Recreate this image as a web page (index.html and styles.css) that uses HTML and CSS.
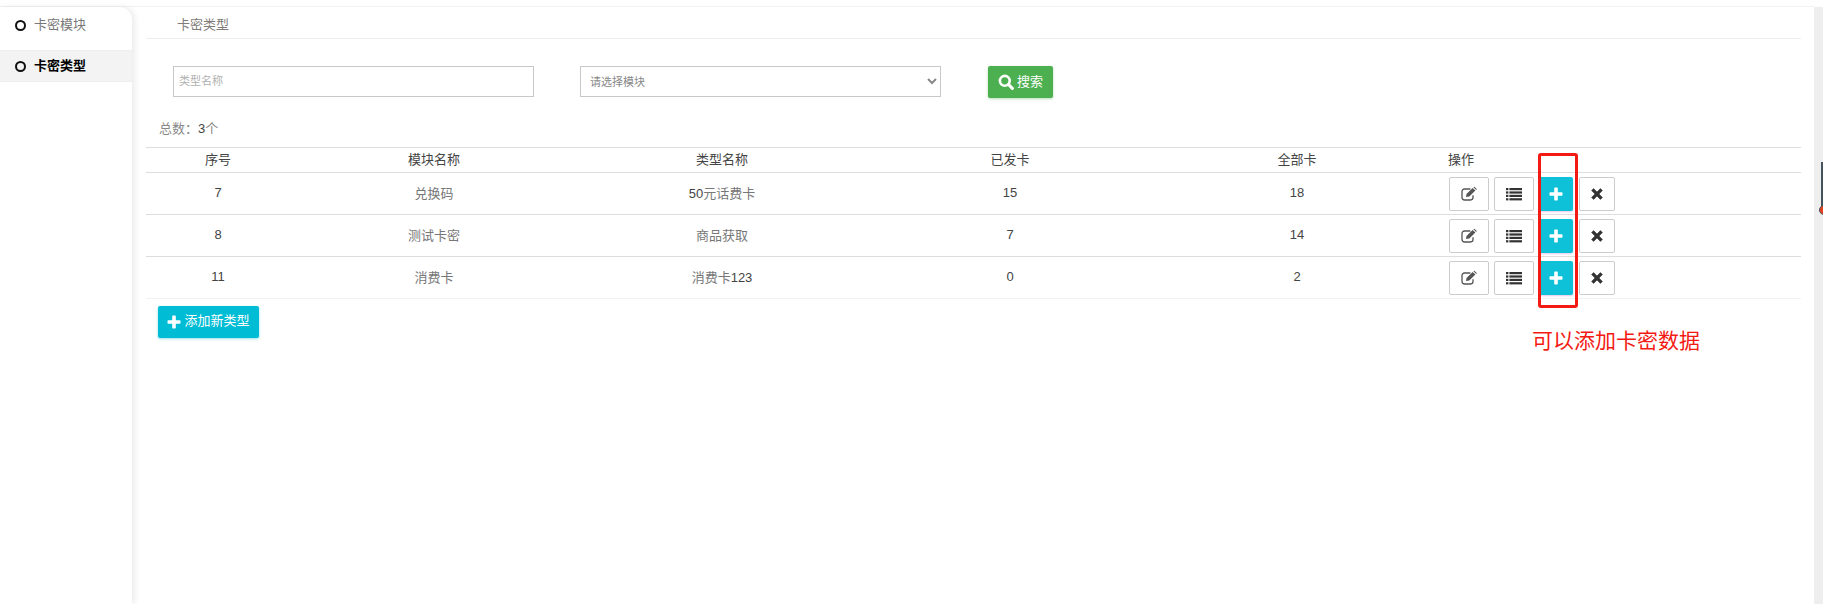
FILE: index.html
```html
<!DOCTYPE html>
<html lang="zh-CN">
<head>
<meta charset="utf-8">
<title>卡密类型</title>
<link rel="stylesheet" href="styles.css">
</head>
<body>
<div class="topline"></div>
<div class="layout">
  <nav class="sidebar">
    <a class="nav-item"><span class="dot"></span><span class="lift">卡密模块</span></a>
    <a class="nav-item active"><span class="dot"></span><span class="lift">卡密类型</span></a>
  </nav>
  <main class="main">
    <div class="crumb">卡密类型</div>
    <form class="search">
      <input class="field field-text" type="text" placeholder="类型名称">
      <select class="field field-select"><option>请选择模块</option></select>
      <button class="btn btn-green" type="button">
        <svg class="ic-search" viewBox="0 0 16 16"><circle cx="6.8" cy="6.8" r="4.9" fill="none" stroke="#fff" stroke-width="2.6"/><path d="M10.4 10.4 14.4 14.4" stroke="#fff" stroke-width="3" stroke-linecap="round"/></svg><span class="btn-label">搜索</span>
      </button>
    </form>
    <div class="total">总数：<span class="num">3</span>个</div>
    <table class="grid">
      <colgroup><col class="c1"><col class="c2"><col class="c2"><col class="c2"><col class="c5"><col></colgroup>
      <thead>
        <tr><th>序号</th><th>模块名称</th><th>类型名称</th><th>已发卡</th><th>全部卡</th><th class="left">操作</th></tr>
      </thead>
      <tbody>
        <tr>
          <td class="num">7</td><td>兑换码</td><td><span class="num">50</span>元话费卡</td><td class="num">15</td><td class="num">18</td>
          <td class="left"><div class="acts">
            <button class="act w40" type="button"><svg class="ic-edit" viewBox="0 0 16 14"><use href="#i-edit"/></svg></button>
            <button class="act w40" type="button"><svg class="ic-list" viewBox="0 0 16 14"><use href="#i-list"/></svg></button>
            <button class="act plus" type="button"><svg class="ic-plus" viewBox="0 0 14 14"><use href="#i-plus"/></svg></button>
            <button class="act w36" type="button"><svg class="ic-x" viewBox="0 0 12 12"><use href="#i-x"/></svg></button>
          </div></td>
        </tr>
        <tr>
          <td class="num">8</td><td>测试卡密</td><td>商品获取</td><td class="num">7</td><td class="num">14</td>
          <td class="left"><div class="acts">
            <button class="act w40" type="button"><svg class="ic-edit" viewBox="0 0 16 14"><use href="#i-edit"/></svg></button>
            <button class="act w40" type="button"><svg class="ic-list" viewBox="0 0 16 14"><use href="#i-list"/></svg></button>
            <button class="act plus" type="button"><svg class="ic-plus" viewBox="0 0 14 14"><use href="#i-plus"/></svg></button>
            <button class="act w36" type="button"><svg class="ic-x" viewBox="0 0 12 12"><use href="#i-x"/></svg></button>
          </div></td>
        </tr>
        <tr class="last">
          <td class="num">11</td><td>消费卡</td><td>消费卡<span class="num">123</span></td><td class="num">0</td><td class="num">2</td>
          <td class="left"><div class="acts">
            <button class="act w40" type="button"><svg class="ic-edit" viewBox="0 0 16 14"><use href="#i-edit"/></svg></button>
            <button class="act w40" type="button"><svg class="ic-list" viewBox="0 0 16 14"><use href="#i-list"/></svg></button>
            <button class="act plus" type="button"><svg class="ic-plus" viewBox="0 0 14 14"><use href="#i-plus"/></svg></button>
            <button class="act w36" type="button"><svg class="ic-x" viewBox="0 0 12 12"><use href="#i-x"/></svg></button>
          </div></td>
        </tr>
      </tbody>
    </table>
    <button class="btn btn-add" type="button"><svg class="ic-plus-sm" viewBox="0 0 14 14"><use href="#i-plus"/></svg><span class="btn-label">添加新类型</span></button>
  </main>
  <div class="strip"></div>
</div>

<div class="mark-box"></div>
<div class="mark-text">可以添加卡密数据</div>
<div class="scroll-line"></div>
<div class="scroll-dot"></div>

<svg class="defs" width="0" height="0">
  <defs>
    <g id="i-edit">
      <path d="M12 8.2V10.6A2.4 2.4 0 0 1 9.6 13H3.4A2.4 2.4 0 0 1 1 10.6V4.4A2.4 2.4 0 0 1 3.4 2H9.4" fill="none" stroke="currentColor" stroke-width="1.3"/>
      <path d="M5 10 5.5 6.9 11.6.9 14.4 3.6 8.3 9.5Z M12.4.2 13.3-.2 15.8 2 15.2 2.9Z" fill="currentColor"/>
    </g>
    <g id="i-list" fill="currentColor">
      <rect x="0" y="1" width="2.4" height="2.2"/><rect x="3.4" y="1" width="12.6" height="2.2"/>
      <rect x="0" y="4.4" width="2.4" height="2.2"/><rect x="3.4" y="4.4" width="12.6" height="2.2"/>
      <rect x="0" y="7.8" width="2.4" height="2.2"/><rect x="3.4" y="7.8" width="12.6" height="2.2"/>
      <rect x="0" y="11.2" width="2.4" height="2.2"/><rect x="3.4" y="11.2" width="12.6" height="2.2"/>
    </g>
    <path id="i-plus" d="M5.2 1.2A.7.7 0 0 1 5.9.5H8.1A.7.7 0 0 1 8.8 1.2V5.2H12.8A.7.7 0 0 1 13.5 5.9V8.1A.7.7 0 0 1 12.8 8.8H8.8V12.8A.7.7 0 0 1 8.1 13.5H5.9A.7.7 0 0 1 5.2 12.8V8.8H1.2A.7.7 0 0 1 .5 8.1V5.9A.7.7 0 0 1 1.2 5.2H5.2Z" fill="currentColor"/>
    <path id="i-x" d="M2.6.6 6 4 9.4.6 11.4 2.6 8 6 11.4 9.4 9.4 11.4 6 8 2.6 11.4.6 9.4 4 6 .6 2.6Z" fill="currentColor" stroke="currentColor" stroke-width=".6" stroke-linejoin="round"/>
  </defs>
</svg>
</body>
</html>
```
FILE: styles.css
```css
* { box-sizing: border-box; }
html, body { margin: 0; height: 100%; overflow: hidden; background: #fff; }
body {
  font-family: "Liberation Sans", "Noto Sans CJK SC", sans-serif;
  font-size: 13px;
  color: #777;
}
.topline { height: 7px; border-bottom: 1px solid #f2f2f2; margin-right: 9px; }
.layout { display: flex; height: 597px; }

.sidebar {
  width: 132px;
  flex: none;
  padding-top: 1px;
  border-top-right-radius: 13px;
  box-shadow: 3px 0 6px rgba(0, 0, 0, .08);
  background: #fff;
}
.nav-item {
  display: flex;
  align-items: center;
  height: 34px;
  padding-left: 15px;
  color: #777;
  margin-bottom: 8px;
}
.nav-item.active {
  height: 32px;
  background: #f3f3f3;
  border-top: 1px solid #eee;
  border-bottom: 1px solid #eee;
  color: #000;
  font-weight: 700;
}
.lift { padding-bottom: 4px; }
.dot {
  width: 11px;
  height: 11px;
  margin-right: 8px;
  border: 2px solid #111;
  border-radius: 50%;
}

.main { flex: 1; margin-left: 14px; margin-right: 13px; min-width: 0; }
.crumb {
  height: 32px;
  padding: 10px 0 0 31px;
  line-height: 16px;
  border-bottom: 1px solid #eee;
  color: #807a78;
}
.search { display: flex; align-items: flex-start; margin: 27px 0 0 27px; }
.field {
  height: 31px;
  width: 361px;
  border: 1px solid #c8c8c8;
  border-radius: 0;
  background: #fff;
  font: 11px "Liberation Sans", "Noto Sans CJK SC", sans-serif;
  color: #888;
}
.field-text { padding: 0 0 2px 5px; }
.field-text::placeholder { color: #b0b0b0; opacity: 1; }
.field-select { margin-left: 46px; padding-left: 5px; }

.btn {
  display: flex;
  align-items: center;
  justify-content: center;
  border: 0;
  border-radius: 2px;
  color: #fff;
  font: 13px "Liberation Sans", "Noto Sans CJK SC", sans-serif;
  padding: 0;
}
.btn-label { padding-bottom: 3px; margin-left: 1px; }
.btn-add .btn-label { padding-bottom: 5px; }
.btn-green {
  width: 65px;
  height: 32px;
  margin-left: 47px;
  background: #4caf50;
  box-shadow: 0 1px 3px rgba(76, 175, 80, .4);
}
.ic-search { width: 16px; height: 16px; margin: 0 2px 1px 0; }

.total { height: 20px; margin: 21px 0 8px 13px; line-height: 20px; color: #888; }
.num { color: #444; }

.grid { width: 100%; table-layout: fixed; border-collapse: collapse; border-top: 1px solid #ddd; }
.c1 { width: 144px; }
.c2 { width: 288px; }
.c5 { width: 286px; }
.grid th {
  height: 25px;
  padding: 0 0 4px;
  font-weight: 400;
  color: #444;
  text-align: center;
  border-bottom: 1px solid #ddd;
}
.grid td {
  height: 42px;
  padding: 0 0 3px;
  text-align: center;
  border-bottom: 1px solid #ddd;
}
.grid .last td { border-bottom-color: #f2f2f2; }
.grid th.left { text-align: left; padding-left: 8px; }
.grid td.left { text-align: left; vertical-align: top; padding: 4px 0 0 8px; }

.acts { display: flex; padding-left: 1px; }
.act {
  display: flex;
  align-items: center;
  justify-content: center;
  height: 34px;
  padding: 0;
  background: #fff;
  border: 1px solid #ccc;
  border-radius: 2px;
  color: #333;
}
.w40 { width: 40px; margin-right: 5px; }
.w36 { width: 36px; }
.plus {
  width: 34px;
  margin-right: 6px;
  border: 0;
  background: #0ec1d8;
  color: #fff;
  box-shadow: 0 1px 2px rgba(156, 39, 176, .25);
}
.ic-edit { width: 16px; height: 14px; color: #555; overflow: visible; }
.ic-list { width: 16px; height: 14px; }
.ic-plus { width: 14px; height: 14px; }
.ic-x { width: 12px; height: 12px; }

.btn-add {
  width: 101px;
  height: 32px;
  margin: 7px 0 0 12px;
  background: #00bcd4;
  box-shadow: 0 1px 3px rgba(0, 188, 212, .4);
}
.ic-plus-sm { width: 14px; height: 14px; margin-right: 2px; }

.strip { width: 9px; flex: none; background: #eee; }
.defs { position: absolute; }

.mark-box {
  position: absolute;
  left: 1538px;
  top: 153px;
  width: 40px;
  height: 155px;
  border: 3px solid #f41a14;
  border-radius: 3px;
}
.mark-text {
  position: absolute;
  left: 1532px;
  top: 326px;
  font-size: 21px;
  line-height: 30px;
  color: #f41a14;
  white-space: nowrap;
}
.scroll-line { position: absolute; left: 1821px; top: 162px; width: 2px; height: 50px; background: #45535c; }
.scroll-dot {
  position: absolute;
  left: 1819px;
  top: 205px;
  width: 10px;
  height: 10px;
  border-radius: 50%;
  background: #e5431f;
  border: 1px solid #45535c;
}
```
